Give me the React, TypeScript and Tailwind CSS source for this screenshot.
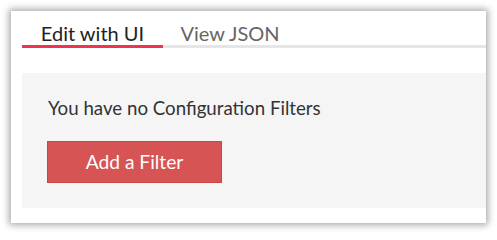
export default function App() {
  return (
    <div className="w-[497px] h-[234px] bg-white pt-[11px] pl-[11px]" style={{ fontFamily: 'Lato, "Open Sans", sans-serif' }}>
      <div className="w-[475px] h-[212px] bg-white shadow-[0_0_7px_2px_rgba(0,0,0,0.35)] pl-[11px] flex flex-col">
        <div className="flex h-[37px] border-b-[3px] border-[#e6e6e6]">
          <div className="relative w-[141px] flex items-start justify-center text-[20px] leading-[24px] text-[#222] pt-[10px]">
            Edit with UI
            <div className="absolute left-0 right-0 bottom-[-3px] h-[3px] bg-[#f0344f]" />
          </div>
          <div className="w-[134px] flex items-start justify-center text-[20px] leading-[24px] text-[#666] pt-[10px]">
            View JSON
          </div>
        </div>
        <div className="mt-[25px] h-[135px] bg-[#f5f5f5] pl-[26px] pt-[23px]">
          <div className="text-[18.7px] leading-[24px] text-[#333]">You have no Configuration Filters</div>
          <button className="mt-[21px] ml-[-1px] w-[175px] h-[42px] bg-[#d65454] border border-[#c94444] text-white text-[19.2px] leading-[24px] flex items-center justify-center">
            Add a Filter
          </button>
        </div>
      </div>
    </div>
  );
}
